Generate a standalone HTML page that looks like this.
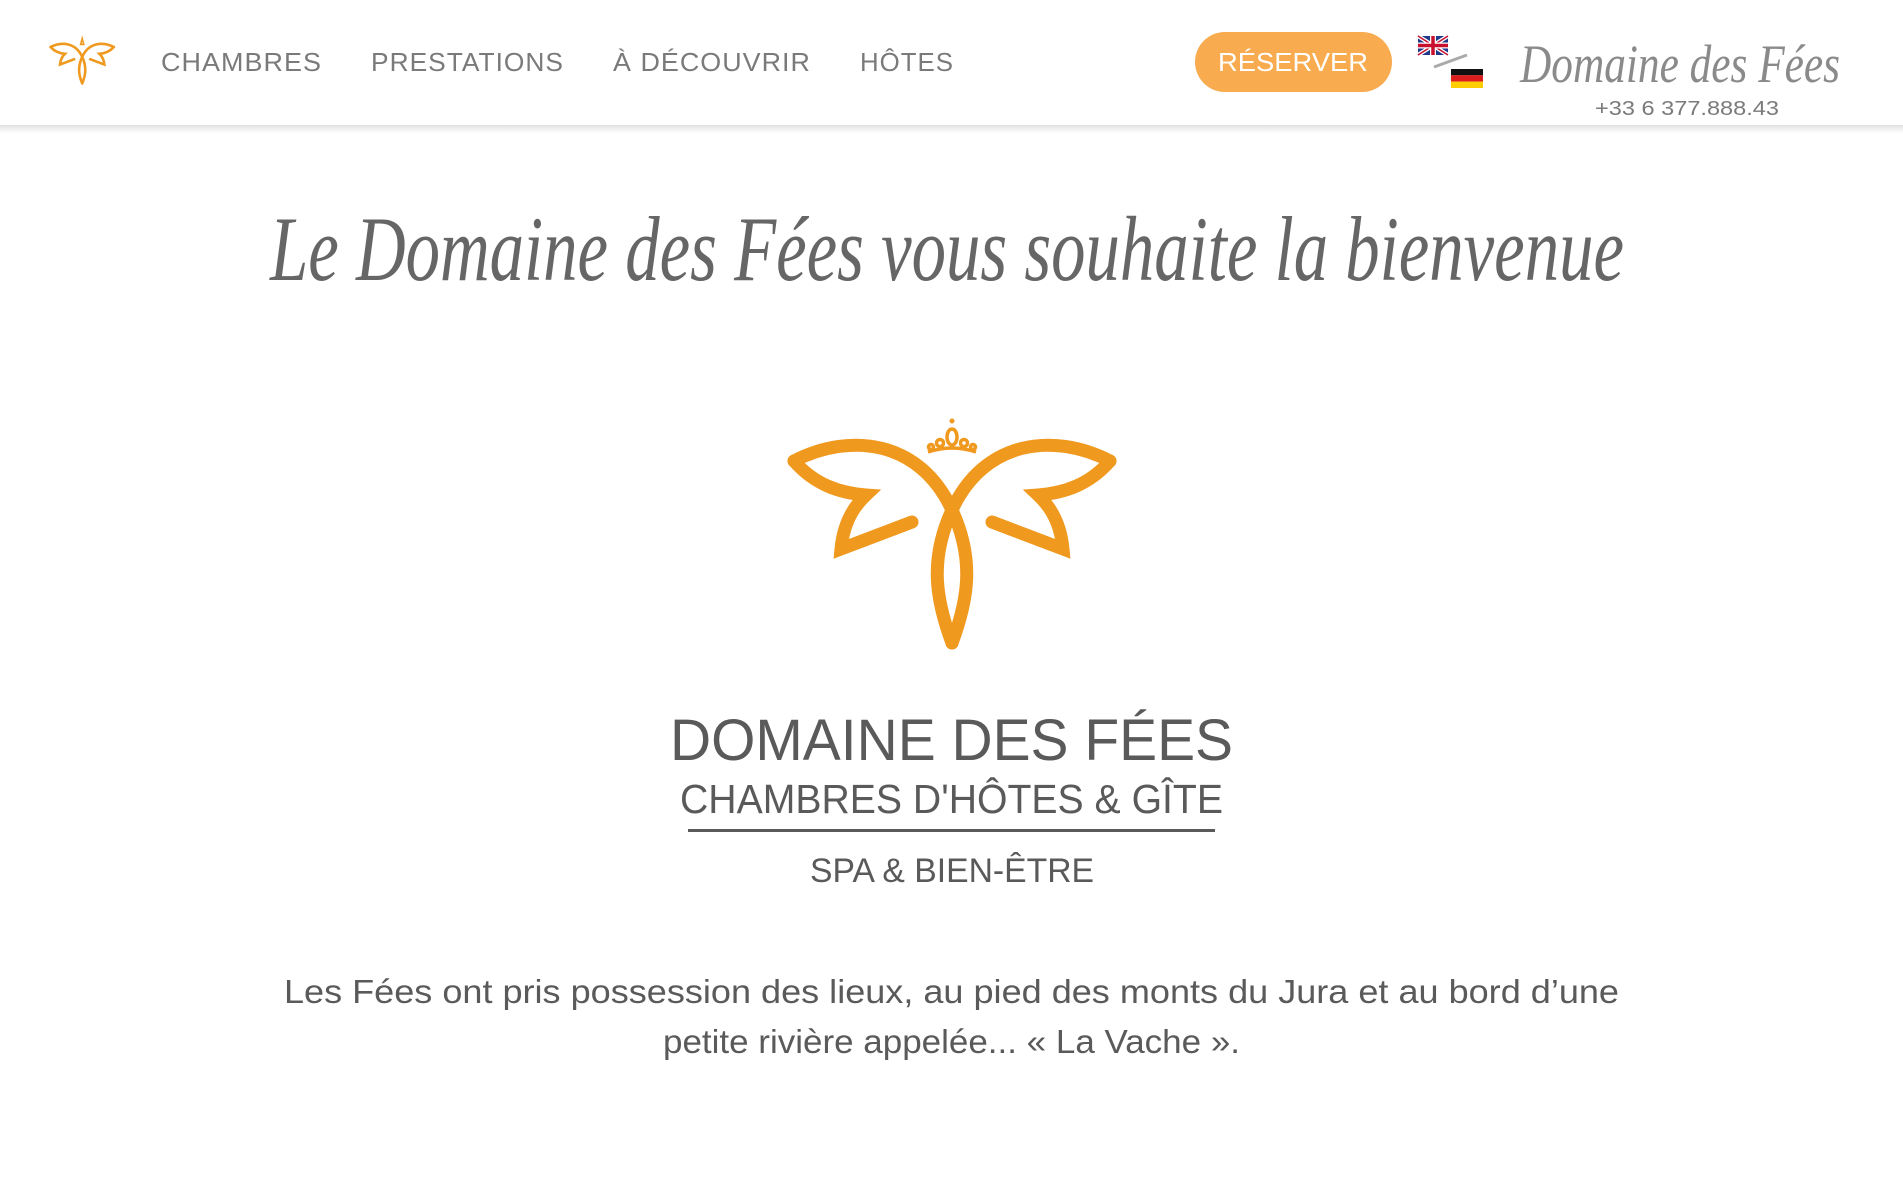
<!DOCTYPE html>
<html><head><meta charset="utf-8"><style>
html,body{margin:0;padding:0;background:#fff;width:1903px;height:1203px;overflow:hidden}
svg{display:block}
</style></head><body>
<svg width="1903" height="1203" viewBox="0 0 1903 1203" xmlns="http://www.w3.org/2000/svg">
<defs>
<linearGradient id="sh" x1="0" y1="0" x2="0" y2="1"><stop offset="0" stop-color="#000" stop-opacity="0.12"/><stop offset="1" stop-color="#000" stop-opacity="0"/></linearGradient>
</defs>
<rect x="0" y="0" width="1903" height="1203" fill="#fff"/>
<rect x="0" y="125" width="1903" height="8" fill="url(#sh)"/>
<!-- header logo -->
<g fill="none" stroke="#f0991f" stroke-linecap="round" transform="translate(49,38) scale(0.2) translate(-786,-416)">
<path d="M794,461 C850,432 920,440 952,510 C975,560 970,600 952,643" stroke-width="13"/>
<path d="M1110,461 C1054,432 984,440 952,510 C929,560 934,600 952,643" stroke-width="13"/>
<path d="M794,461 C815,485 840,493 866,495 C850,510 843,528 841,549 L912,522" stroke-width="13"/>
<path d="M1110,461 C1089,485 1064,493 1038,495 C1054,510 1061,528 1063,549 L992,522" stroke-width="13"/>
<path d="M952,418 L944,448 L960,448 Z" stroke-width="8"/>
</g>
<g font-family="Liberation Sans, sans-serif" font-size="26" fill="#7a7a7a" letter-spacing="1">
<text x="161" y="71" textLength="161" lengthAdjust="spacingAndGlyphs">CHAMBRES</text>
<text x="371" y="71" textLength="193" lengthAdjust="spacingAndGlyphs">PRESTATIONS</text>
<text x="613" y="71" textLength="198" lengthAdjust="spacingAndGlyphs">À DÉCOUVRIR</text>
<text x="860" y="71" textLength="94" lengthAdjust="spacingAndGlyphs">HÔTES</text>
</g>
<rect x="1195" y="32" width="197" height="60" rx="30" fill="#f8ab4f"/>
<text x="1293" y="71" text-anchor="middle" font-family="Liberation Sans, sans-serif" font-size="26" fill="#fff" textLength="150" lengthAdjust="spacingAndGlyphs">RÉSERVER</text>
<!-- UK flag -->
<g transform="translate(1418,36)">
<rect width="30" height="19" fill="#1f3a8a"/>
<path d="M0,0 L30,19 M30,0 L0,19" stroke="#fff" stroke-width="4"/>
<path d="M0,0 L30,19 M30,0 L0,19" stroke="#c8102e" stroke-width="1.5"/>
<path d="M15,0 V19 M0,9.5 H30" stroke="#fff" stroke-width="6"/>
<path d="M15,0 V19 M0,9.5 H30" stroke="#c8102e" stroke-width="3.5"/>
</g>
<line x1="1434" y1="67" x2="1467" y2="55" stroke="#aaa" stroke-width="3"/>
<g transform="translate(1451,69)">
<rect width="32" height="6.3" fill="#111"/><rect y="6.3" width="32" height="6.3" fill="#dd1c1c"/><rect y="12.6" width="32" height="6.4" fill="#ffce00"/>
</g>
<text x="1520" y="82" font-family="Liberation Serif, serif" font-style="italic" font-size="54" fill="#8a8a8a" textLength="320" lengthAdjust="spacingAndGlyphs">Domaine des Fées</text>
<text x="1687" y="115" text-anchor="middle" font-family="Liberation Sans, sans-serif" font-size="20" fill="#7a7a7a" textLength="184" lengthAdjust="spacingAndGlyphs">+33 6 377.888.43</text>
<!-- title -->
<text x="270" y="280" font-family="Liberation Serif, serif" font-style="italic" font-size="92" fill="#666" textLength="1354" lengthAdjust="spacingAndGlyphs">Le Domaine des Fées vous souhaite la bienvenue</text>
<!-- butterfly -->
<g fill="none" stroke="#f0991f" stroke-width="13" stroke-linecap="round" stroke-linejoin="miter">
<path d="M794,461 C850,432 920,440 952,510 C975,560 968,600 952,643"/>
<path d="M1110,461 C1054,432 984,440 952,510 C929,560 936,600 952,643"/>
<path d="M794,461 C815,485 840,493 866,495 C850,510 843,528 841,549 L912,522"/>
<path d="M1110,461 C1089,485 1064,493 1038,495 C1054,510 1061,528 1063,549 L992,522"/>
</g>
<g fill="none" stroke="#f0991f" stroke-width="3.5">
<ellipse cx="952" cy="437" rx="5" ry="8"/>
<circle cx="940" cy="443" r="3.5"/><circle cx="964" cy="443" r="3.5"/>
<circle cx="931" cy="447" r="2.5"/><circle cx="973" cy="447" r="2.5"/>
<path d="M928,452 Q952,444 976,452"/>
</g>
<circle cx="952" cy="421" r="2.5" fill="#f0991f"/>
<!-- headings -->
<g font-family="Liberation Sans, sans-serif" fill="#5a5a5a">
<text x="670" y="760" font-size="58" textLength="563" lengthAdjust="spacingAndGlyphs">DOMAINE DES FÉES</text>
<text x="680" y="813" font-size="41" textLength="543" lengthAdjust="spacingAndGlyphs">CHAMBRES D'HÔTES &amp; GÎTE</text>
<rect x="688" y="829" width="527" height="3" fill="#5a5a5a"/>
<text x="810" y="882" font-size="34" textLength="284" lengthAdjust="spacingAndGlyphs">SPA &amp; BIEN-ÊTRE</text>
<text x="284" y="1003" font-size="33" textLength="1335" lengthAdjust="spacingAndGlyphs">Les Fées ont pris possession des lieux, au pied des monts du Jura et au bord d’une</text>
<text x="663" y="1053" font-size="33" textLength="577" lengthAdjust="spacingAndGlyphs">petite rivière appelée... « La Vache ».</text>
</g>
</svg>
</body></html>
